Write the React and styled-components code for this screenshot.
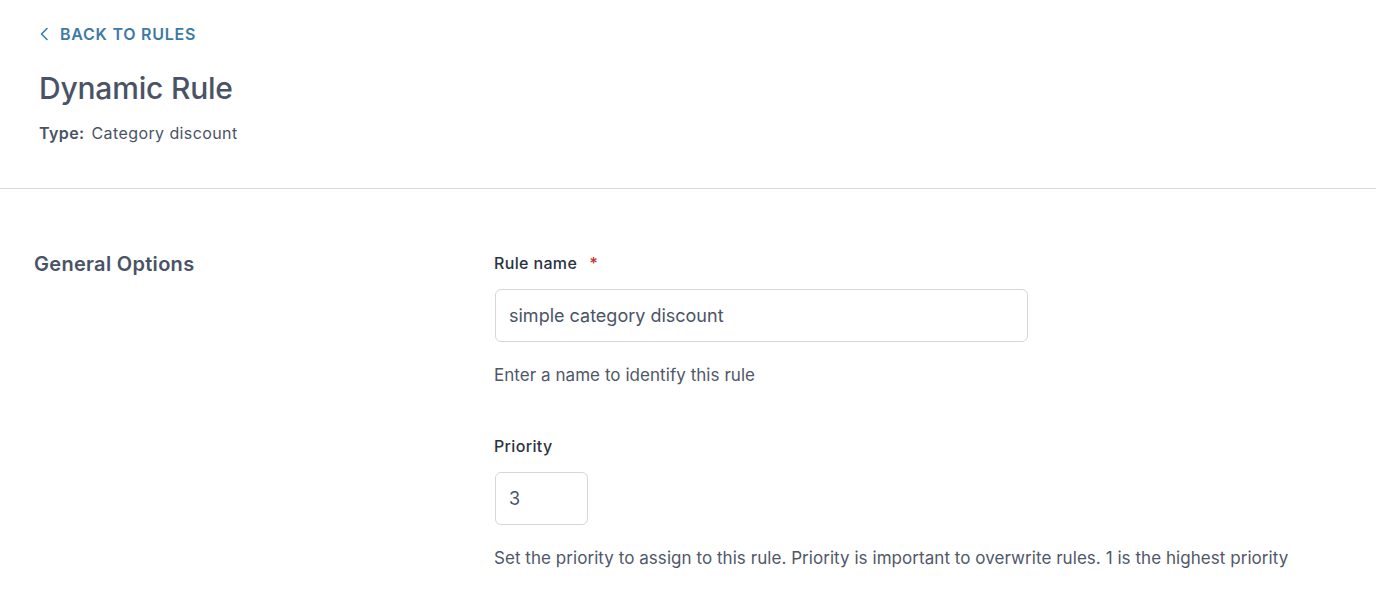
import React from "react";
import styled, { createGlobalStyle } from "styled-components";

const Global = createGlobalStyle`
  html, body { margin: 0; padding: 0; background: #fff; }
  body { font-family: Inter, "Open Sans", "Liberation Sans", sans-serif; -webkit-font-smoothing: antialiased; }
  * { box-sizing: border-box; }
`;

const Page = styled.div`
  width: 1376px;
  min-height: 604px;
  background: #fff;
`;

const Header = styled.header`
  padding: 24px 39px 0 39px;
  height: 189px;
  border-bottom: 1px solid #d3d8d8;
  display: flex;
  flex-direction: column;
`;

const BackLink = styled.a`
  display: inline-flex;
  align-items: center;
  gap: 10px;
  color: #3d7aa5;
  font-size: 16px;
  font-weight: 600;
  letter-spacing: 0.75px;
  text-decoration: none;
  height: 20px;
  cursor: pointer;
`;

const Title = styled.h1`
  margin: 26px 0 0 0;
  font-size: 30px;
  line-height: 36px;
  font-weight: 500;
  color: #4a5366;
  letter-spacing: -0.2px;
`;

const Meta = styled.div`
  margin-top: 17px;
  font-size: 16px;
  line-height: 20px;
  color: #4a5366;
  letter-spacing: 0.4px;
  display: flex;
  gap: 7px;
`;

const MetaKey = styled.span`
  font-weight: 600;
`;

const Section = styled.section`
  display: grid;
  grid-template-columns: 460px 1fr;
  padding: 61px 0 0 34px;
`;

const SectionTitle = styled.h2`
  margin: 0;
  font-size: 20px;
  line-height: 28px;
  font-weight: 600;
  color: #4a5366;
  letter-spacing: 0.3px;
`;

const Fields = styled.div`
  display: flex;
  flex-direction: column;
  gap: 48px;
  padding-top: 1px;
`;

const Field = styled.div`
  display: flex;
  flex-direction: column;
`;

const Label = styled.label`
  font-size: 16px;
  line-height: 24px;
  font-weight: 500;
  color: #2b3240;
  letter-spacing: 0.35px;
  display: flex;
  gap: 12px;
`;

const Required = styled.span`
  color: #c23a3a;
  font-weight: 600;
`;

const Input = styled.input`
  margin-top: 14px;
  margin-left: 1px;
  width: ${(p) => p.$width}px;
  height: 53px;
  border: 1px solid #d3d6db;
  border-radius: 6px;
  padding: 0 13px;
  font-family: inherit;
  font-size: 18px;
  color: #4a5366;
  background: #fff;
  outline: none;
`;

const Help = styled.p`
  margin: 22px 0 0 0;
  font-size: 17px;
  line-height: 22px;
  letter-spacing: 0.05px;
  color: #4f5868;
`;

export default function App() {
  return (
    <Page>
      <Global />
      <Header>
        <BackLink>
          <svg width="11" height="14" viewBox="0 0 11 14" fill="none">
            <path d="M8 1.5L2.5 7L8 12.5" stroke="#3d7aa5" strokeWidth="1.6" strokeLinecap="round" strokeLinejoin="round" />
          </svg>
          BACK TO RULES
        </BackLink>
        <Title>Dynamic Rule</Title>
        <Meta>
          <MetaKey>Type:</MetaKey>
          <span>Category discount</span>
        </Meta>
      </Header>
      <Section>
        <SectionTitle>General Options</SectionTitle>
        <Fields>
          <Field>
            <Label>
              Rule name <Required>*</Required>
            </Label>
            <Input $width={533} defaultValue="simple category discount" />
            <Help>Enter a name to identify this rule</Help>
          </Field>
          <Field>
            <Label>Priority</Label>
            <Input $width={93} defaultValue="3" />
            <Help>
              Set the priority to assign to this rule. Priority is important to overwrite rules. 1 is the highest priority
            </Help>
          </Field>
        </Fields>
      </Section>
    </Page>
  );
}
